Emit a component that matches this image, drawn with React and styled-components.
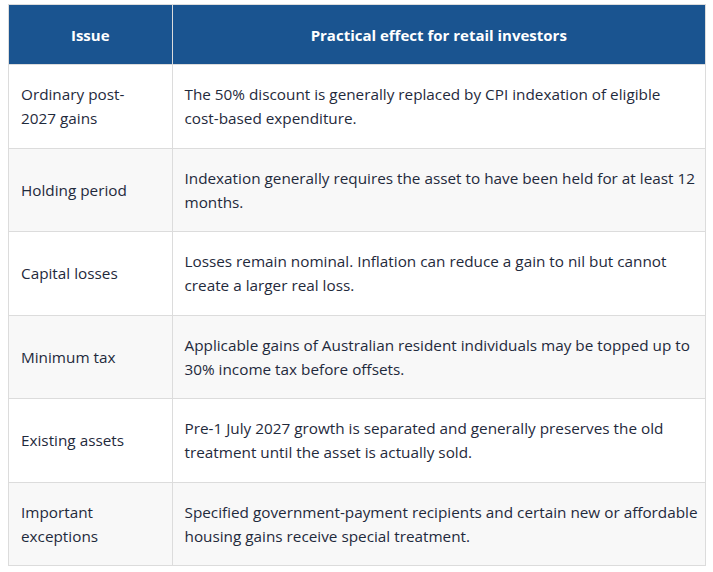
import React from 'react'
import styled, { createGlobalStyle } from 'styled-components'

const GlobalStyle = createGlobalStyle`
  html, body {
    margin: 0;
    padding: 0;
    background: #ffffff;
  }
  body {
    font-family: "Open Sans", "Liberation Sans", sans-serif;
    -webkit-font-smoothing: antialiased;
  }
`

const Page = styled.div`
  padding: 4px 7px 0 8px;
`

const Table = styled.table`
  width: 100%;
  table-layout: fixed;
  border-collapse: collapse;
  border: 1px solid #dcdcdc;
  font-size: 15.3px;
  line-height: 24px;
  color: #1f2a3c;
`

const HeadCell = styled.th`
  background: #1a5490;
  color: #ffffff;
  font-weight: 700;
  font-size: 15px;
  text-align: center;
  padding: 17.5px 12px;
  border: 1px solid #dcdcdc;
  border-top: none;
  border-bottom: none;
  box-sizing: border-box;
  width: ${p => p.$width || 'auto'};
`

const Row = styled.tr`
  background: ${p => (p.$alt ? '#f8f8f8' : '#ffffff')};
`

const Cell = styled.td`
  padding: 17.25px 12px;
  border: 1px solid #dcdcdc;
  vertical-align: middle;
  text-align: left;
`

const Line = styled.span`
  display: block;
  white-space: nowrap;
`

// lines kept as in the source layout so wrapping matches
const rows = [
  [['Ordinary post-', '2027 gains'], ['The 50% discount is generally replaced by CPI indexation of eligible', 'cost-based expenditure.']],
  [['Holding period'], ['Indexation generally requires the asset to have been held for at least 12', 'months.']],
  [['Capital losses'], ['Losses remain nominal. Inflation can reduce a gain to nil but cannot', 'create a larger real loss.']],
  [['Minimum tax'], ['Applicable gains of Australian resident individuals may be topped up to', '30% income tax before offsets.']],
  [['Existing assets'], ['Pre-1 July 2027 growth is separated and generally preserves the old', 'treatment until the asset is actually sold.']],
  [['Important', 'exceptions'], ['Specified government-payment recipients and certain new or affordable', 'housing gains receive special treatment.']],
]

export default function App() {
  return (
    <Page>
      <GlobalStyle />
      <Table>
        <thead>
          <tr>
            <HeadCell $width="163.5px">Issue</HeadCell>
            <HeadCell>Practical effect for retail investors</HeadCell>
          </tr>
        </thead>
        <tbody>
          {rows.map(([issue, effect], i) => (
            <Row key={issue.join(' ')} $alt={i % 2 === 1}>
              <Cell>{issue.map(t => <Line key={t}>{t}</Line>)}</Cell>
              <Cell>{effect.map(t => <Line key={t}>{t}</Line>)}</Cell>
            </Row>
          ))}
        </tbody>
      </Table>
    </Page>
  )
}
